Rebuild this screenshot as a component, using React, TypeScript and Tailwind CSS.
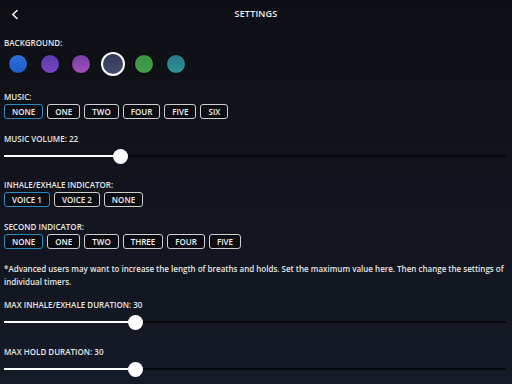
import React from 'react';

const font = { fontFamily: '"Open Sans", "Noto Sans", sans-serif' };

const colors = [
  { id: 'blue', cls: 'bg-gradient-to-b from-[#2b6fd8] to-[#1d5fc4]' },
  { id: 'violet', cls: 'bg-gradient-to-b from-[#5a3aa8] to-[#7a44c4]' },
  { id: 'purple', cls: 'bg-gradient-to-b from-[#7a3ea8] to-[#a24fb8]' },
  { id: 'slate', cls: 'bg-gradient-to-b from-[#333a55] to-[#434c6c]' },
  { id: 'green', cls: 'bg-gradient-to-b from-[#3a9440] to-[#44a04c]' },
  { id: 'teal', cls: 'bg-gradient-to-b from-[#2a7a8a] to-[#2a9492]' },
];

function Label({ children, className = '' }: { children: React.ReactNode; className?: string }) {
  return (
    <div className={`text-[8px] leading-[10px] font-semibold text-[#e6e6e6] ${className}`}>{children}</div>
  );
}

function Options({ items, selected, className = '' }: { items: string[]; selected: string; className?: string }) {
  return (
    <div className={`flex gap-[4px] ${className}`}>
      {items.map((item) => (
        <div
          key={item}
          className={`h-[15px] px-[7px] flex items-center justify-center rounded-[3px] border-[1.5px] bg-[#0b0c11] text-[8px] font-semibold text-[#f0f0f0] ${
            item === selected ? 'border-[#2b8cc4]' : 'border-[#cfcfcf]'
          }`}
        >
          {item}
        </div>
      ))}
    </div>
  );
}

function Slider({ thumbX, className = '' }: { thumbX: number; className?: string }) {
  return (
    <div className={`relative h-[16px] mr-[2px] ${className}`}>
      <div className="absolute left-0 right-0 top-[7px] h-[2px] bg-[#07080c]" />
      <div className="absolute left-0 top-[7px] h-[2px] bg-white" style={{ width: thumbX }} />
      <div
        className="absolute top-[0.5px] w-[15px] h-[15px] rounded-full bg-white"
        style={{ left: thumbX - 7.5 }}
      />
    </div>
  );
}

export default function App() {
  return (
    <div
      className="w-[512px] h-[384px] overflow-hidden bg-gradient-to-b from-[#0e0f14] via-[#11141c] to-[#151a27] text-white"
      style={font}
    >
      <div className="relative h-[28px] flex items-center justify-center">
        <svg className="absolute left-[10px] top-[9px]" width="10" height="11" viewBox="0 0 10 11">
          <path d="M7 1.5 L2.8 5.5 L7 9.5" fill="none" stroke="#f2f2f2" strokeWidth="1.6" strokeLinecap="round" strokeLinejoin="round" />
        </svg>
        <span className="text-[9px] font-semibold tracking-[0.2px] text-[#f0f0f0]">SETTINGS</span>
      </div>

      <div className="px-[4px]">
        <Label className="mt-[10px]">BACKGROUND:</Label>
        <div className="mt-[4px] h-[24px] flex items-center gap-[11.5px] pl-[4px]">
          {colors.map((c) =>
            c.id === 'slate' ? (
              <div key={c.id} className={`w-[24px] h-[24px] -mx-[2px] rounded-full border-2 border-white ${c.cls}`} />
            ) : (
              <div key={c.id} className={`w-[20px] h-[20px] rounded-full border border-[#050507] ${c.cls}`} />
            )
          )}
        </div>

        <Label className="mt-[16px]">MUSIC:</Label>
        <Options className="mt-[2px]" items={['NONE', 'ONE', 'TWO', 'FOUR', 'FIVE', 'SIX']} selected="NONE" />

        <Label className="mt-[15px]">MUSIC VOLUME: 22</Label>
        <Slider className="mt-[4px]" thumbX={116} />

        <Label className="mt-[16px]">INHALE/EXHALE INDICATOR:</Label>
        <Options className="mt-[2px]" items={['VOICE 1', 'VOICE 2', 'NONE']} selected="VOICE 1" />

        <Label className="mt-[15px]">SECOND INDICATOR:</Label>
        <Options className="mt-[2px]" items={['NONE', 'ONE', 'TWO', 'THREE', 'FOUR', 'FIVE']} selected="NONE" />

        <p className="mt-[13px] text-[8px] leading-[13px] font-semibold text-[#e6e6e6] pr-[2px]">
          *Advanced users may want to increase the length of breaths and holds. Set the maximum value here. Then change the settings of individual timers.
        </p>

        <Label className="mt-[12px]">MAX INHALE/EXHALE DURATION: 30</Label>
        <Slider className="mt-[4px]" thumbX={131} />

        <Label className="mt-[17px]">MAX HOLD DURATION: 30</Label>
        <Slider className="mt-[4px]" thumbX={131} />
      </div>
    </div>
  );
}
